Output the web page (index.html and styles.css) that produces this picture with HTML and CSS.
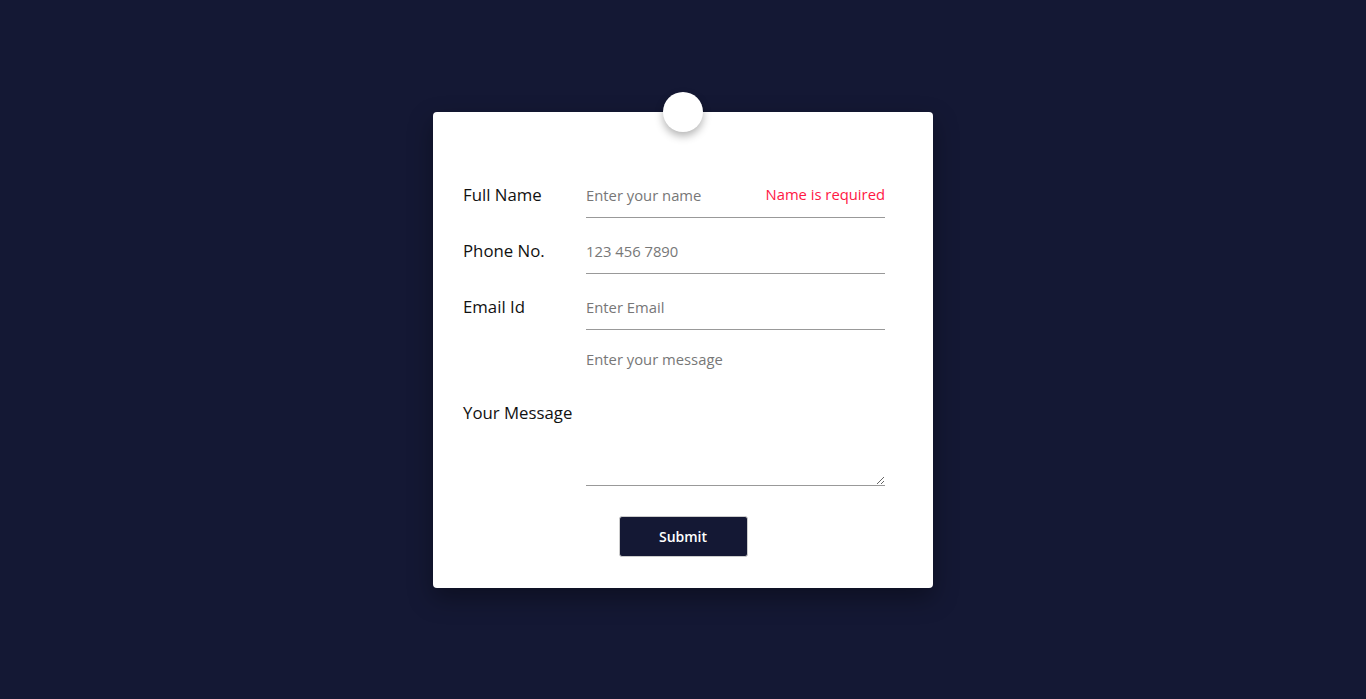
FILE: index.html
```html
<!DOCTYPE html>
<html lang="en">
<head>
    <meta charset="UTF-8">
    <meta name="viewport" content="width=device-width, initial-scale=1.0">
    <title>Contact Form</title>
    <link rel="stylesheet" href="styles.css">
</head>
<body>
    <div class="page">
        <div class="card">
            <!-- pin on top of the card -->
            <div class="pin"></div>
            <form class="contact-form">
                <div class="form-row">
                    <label for="name">Full Name</label>
                    <div class="field">
                        <input type="text" id="name" placeholder="Enter your name">
                        <span class="error">Name is required</span>
                    </div>
                </div>
                <div class="form-row">
                    <label for="phone">Phone No.</label>
                    <div class="field">
                        <input type="text" id="phone" placeholder="123 456 7890">
                    </div>
                </div>
                <div class="form-row">
                    <label for="email">Email Id</label>
                    <div class="field">
                        <input type="email" id="email" placeholder="Enter Email">
                    </div>
                </div>
                <div class="form-row">
                    <label for="message">Your Message</label>
                    <div class="field">
                        <textarea id="message" placeholder="Enter your message"></textarea>
                    </div>
                </div>
                <div class="actions">
                    <button type="button">Submit</button>
                </div>
            </form>
        </div>
    </div>
</body>
</html>
```

FILE: styles.css
```css
body {
    margin: 0;
    padding: 0;
    background: #141834;
    font-family: "Open Sans", Arial, sans-serif;
}
.page {
    height: 699px;
    display: flex;
    justify-content: center;
    align-items: flex-start;
    padding-top: 112px;
    box-sizing: border-box;
}
.card {
    position: relative;
    width: 500px;
    background: #fff;
    border-radius: 4px;
    padding: 61px 30px 31px 30px;
    box-sizing: border-box;
    box-shadow: 0 10px 25px rgba(0, 0, 0, 0.35);
}
.pin {
    position: absolute;
    top: -20px;
    left: 230px;
    width: 40px;
    height: 40px;
    border-radius: 50%;
    background: #fff;
    box-shadow: 0 4px 8px rgba(0, 0, 0, 0.3);
}
.contact-form {
    display: flex;
    flex-direction: column;
    gap: 11px;
}
.form-row {
    display: flex;
    align-items: center;
    padding-right: 18px;
}
.form-row label {
    width: 123px;
    font-size: 16.8px;
    color: #111;
    margin-top: -2px;
}
.field {
    position: relative;
    flex: 1;
}
.field input,
.field textarea {
    display: block;
    width: 100%;
    box-sizing: border-box;
    border: none;
    border-bottom: 1px solid #999;
    outline: none;
    font-family: inherit;
    font-size: 14.8px;
    color: #333;
    padding: 0;
}
.field input {
    height: 45px;
}
.field textarea {
    height: 145px;
    padding-top: 8px;
    line-height: 20px;
}
.field ::placeholder {
    color: #777;
}
.error {
    position: absolute;
    right: 0;
    top: 11px;
    font-size: 14.8px;
    color: #ff1744;
}
.actions {
    display: flex;
    justify-content: center;
    padding-top: 19px;
}
.actions button {
    width: 129px;
    height: 41px;
    background: #141834;
    color: #fff;
    border: 1px solid #ccc;
    border-radius: 3px;
    font-family: inherit;
    font-size: 14px;
    font-weight: 600;
}
```
